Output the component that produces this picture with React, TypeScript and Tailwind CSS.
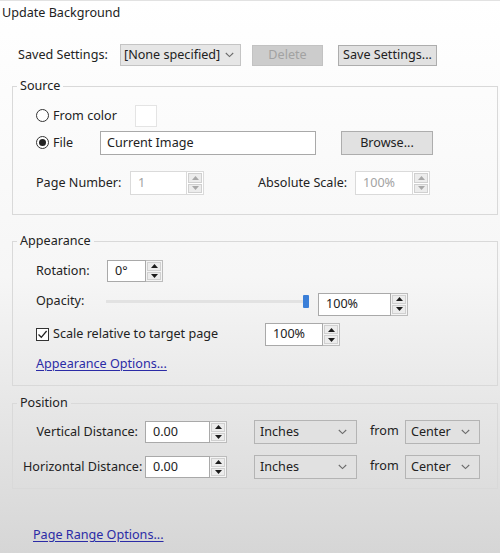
import React from 'react';

const font = { fontFamily: '"Noto Sans", "Open Sans", Arial, sans-serif' };

const Chevron = ({ color = '#6b6b6b' }: { color?: string }) => (
  <svg width="9" height="6" viewBox="0 0 9 6" className="shrink-0">
    <path d="M0.8 1 L4.5 4.6 L8.2 1" fill="none" stroke={color} strokeWidth="1.1" />
  </svg>
);

const Arrow = ({ up, disabled }: { up?: boolean; disabled?: boolean }) => (
  <div className="flex-1 flex items-center justify-center bg-[#ececec] border border-[#d0d0d0]">
    <svg width="7" height="4" viewBox="0 0 7 4">
      <path d={up ? 'M0 4 L3.5 0 L7 4 Z' : 'M0 0 L3.5 4 L7 0 Z'} fill={disabled ? '#a8a8a8' : '#1c1c1c'} />
    </svg>
  </div>
);

const Spin = ({ value, width, height = 'h-[22px]', disabled }: { value: string; width: string; height?: string; disabled?: boolean }) => (
  <div className={`${width} ${height} flex shrink-0`}>
    <div
      className={`flex-1 flex items-center pl-[7px] bg-white border ${
        disabled ? 'border-[#dadada] text-[#a3a3a3]' : 'border-[#a9a9a9] text-[#222]'
      }`}
    >
      {value}
    </div>
    <div className={`w-[17px] flex flex-col gap-[1px] p-[1px] border-y border-r ${disabled ? 'border-[#dadada] bg-white' : 'border-[#bcbcbc] bg-[#f4f4f4]'}`}>
      <Arrow up disabled={disabled} />
      <Arrow disabled={disabled} />
    </div>
  </div>
);

const Dropdown = ({ value, width }: { value: string; width: string }) => (
  <div className={`${width} h-[24px] shrink-0 flex items-center justify-between pl-[5px] pr-[9px] bg-[#e1e1e1] border border-[#b4b4b4] text-[#222]`}>
    <span>{value}</span>
    <Chevron />
  </div>
);

const Radio = ({ checked }: { checked?: boolean }) => (
  <div className="w-[13px] h-[13px] rounded-full border border-[#333] bg-white flex items-center justify-center shrink-0">
    {checked && <div className="w-[7px] h-[7px] rounded-full bg-[#222]" />}
  </div>
);

const Group = ({ title, className, inner, children }: { title: string; className: string; inner: string; children: React.ReactNode }) => (
  <fieldset className={`ml-[12px] w-[486px] border border-[#d9d9d9] ${className}`}>
    <legend className="ml-[4px] px-[3px] leading-[18px] text-[#222]">{title}</legend>
    <div className={inner}>{children}</div>
  </fieldset>
);

export default function App() {
  return (
    <div
      style={font}
      className="w-[500px] h-[553px] overflow-hidden text-[12.6px] whitespace-nowrap text-[#222] bg-gradient-to-b from-white via-[#f6f6f6] to-[#d6d6d6] border-t border-[#e2e2e2]"
    >
      <div className="pl-[2px] pt-[2px] leading-[20px]">Update Background</div>

      {/* Saved settings */}
      <div className="mt-[21px] ml-[18px] h-[22px] flex items-center">
        <span className="w-[102px]">Saved Settings:</span>
        <div className="w-[121px] h-[22px] flex items-center justify-between pl-[3px] pr-[6px] bg-[#e6e6e6] border border-[#c4c4c4]">
          <span>[None specified]</span>
          <Chevron />
        </div>
        <div className="ml-[11px] w-[71px] h-[21px] flex items-center justify-center bg-[#cccccc] border border-[#c2c2c2] text-[#a2a2a2]">
          Delete
        </div>
        <div className="ml-[15px] w-[99px] h-[21px] flex items-center justify-center bg-[#e1e1e1] border border-[#adadad]">
          Save Settings...
        </div>
      </div>

      {/* Source */}
      <Group title="Source" className="mt-[11px]" inner="pl-[23px] pt-[10px] pb-[19px]">
        <div className="h-[22px] flex items-center">
          <div className="w-[99px] flex items-center gap-[4px]">
            <Radio />
            <span>From color</span>
          </div>
          <div className="w-[22px] h-[22px] bg-white border border-[#e4e4e4]" />
        </div>
        <div className="mt-[4px] h-[24px] flex items-center">
          <div className="w-[64px] flex items-center gap-[4px]">
            <Radio checked />
            <span>File</span>
          </div>
          <div className="w-[216px] h-[24px] flex items-center pl-[6px] bg-white border border-[#a9a9a9]">Current Image</div>
          <div className="ml-[25px] w-[92px] h-[24px] flex items-center justify-center bg-[#e1e1e1] border border-[#adadad]">
            Browse...
          </div>
        </div>
        <div className="mt-[16px] h-[24px] flex items-center">
          <span className="w-[94px]">Page Number:</span>
          <Spin value="1" width="w-[74px]" height="h-[24px]" disabled />
          <span className="ml-[54px] w-[97px]">Absolute Scale:</span>
          <Spin value="100%" width="w-[75px]" height="h-[24px]" disabled />
        </div>
      </Group>

      {/* Appearance */}
      <Group title="Appearance" className="mt-[17px]" inner="pl-[23px] pt-[10px] pb-[12px]">
        <div className="h-[22px] flex items-center">
          <span className="w-[71px]">Rotation:</span>
          <Spin value="0°" width="w-[56px]" />
        </div>
        <div className="mt-[7px] h-[24px] flex items-center">
          <span className="w-[70px]">Opacity:</span>
          <div className="w-[203px] h-[14px] flex items-center">
            <div className="flex-1 h-[3px] bg-[#e2e2e2]" />
            <div className="w-[6px] h-[13px] bg-[#3b7fd8] rounded-[1px]" />
          </div>
          <div className="ml-[9px] translate-y-[3px]">
            <Spin value="100%" width="w-[90px]" height="h-[23px]" />
          </div>
        </div>
        <div className="mt-[10px] h-[23px] flex items-center">
          <div className="w-[229px] flex items-center gap-[4px]">
            <div className="w-[13px] h-[13px] border border-[#333] bg-white flex items-center justify-center">
              <svg width="11" height="11" viewBox="0 0 11 11">
                <path d="M1.5 5.5 L4.3 8.3 L9.6 2" fill="none" stroke="#222" strokeWidth="1.3" />
              </svg>
            </div>
            <span>Scale relative to target page</span>
          </div>
          <Spin value="100%" width="w-[75px]" height="h-[23px]" />
        </div>
        <div className="mt-[9px] leading-[18px] text-[#2b2ba6] underline underline-offset-2">Appearance Options...</div>
      </Group>

      {/* Position */}
      <Group title="Position" className="mt-[8px]" inner="pl-[10px] pt-[8px] pb-[9px]">
        {['Vertical Distance:', 'Horizontal Distance:'].map((label, i) => (
          <div key={label} className={`${i ? 'mt-[11px]' : ''} h-[24px] flex items-center`}>
            <span className="w-[115px] text-right">{label}</span>
            <div className="ml-[7px]">
              <Spin value="0.00" width="w-[82px]" />
            </div>
            <div className="ml-[27px]">
              <Dropdown value="Inches" width="w-[103px]" />
            </div>
            <span className="ml-[13px] w-[35px] -translate-y-[1px]">from</span>
            <Dropdown value="Center" width="w-[75px]" />
          </div>
        ))}
      </Group>

      <div className="mt-[37px] ml-[33px] leading-[18px] text-[#2b2ba6] underline underline-offset-2">Page Range Options...</div>
    </div>
  );
}
